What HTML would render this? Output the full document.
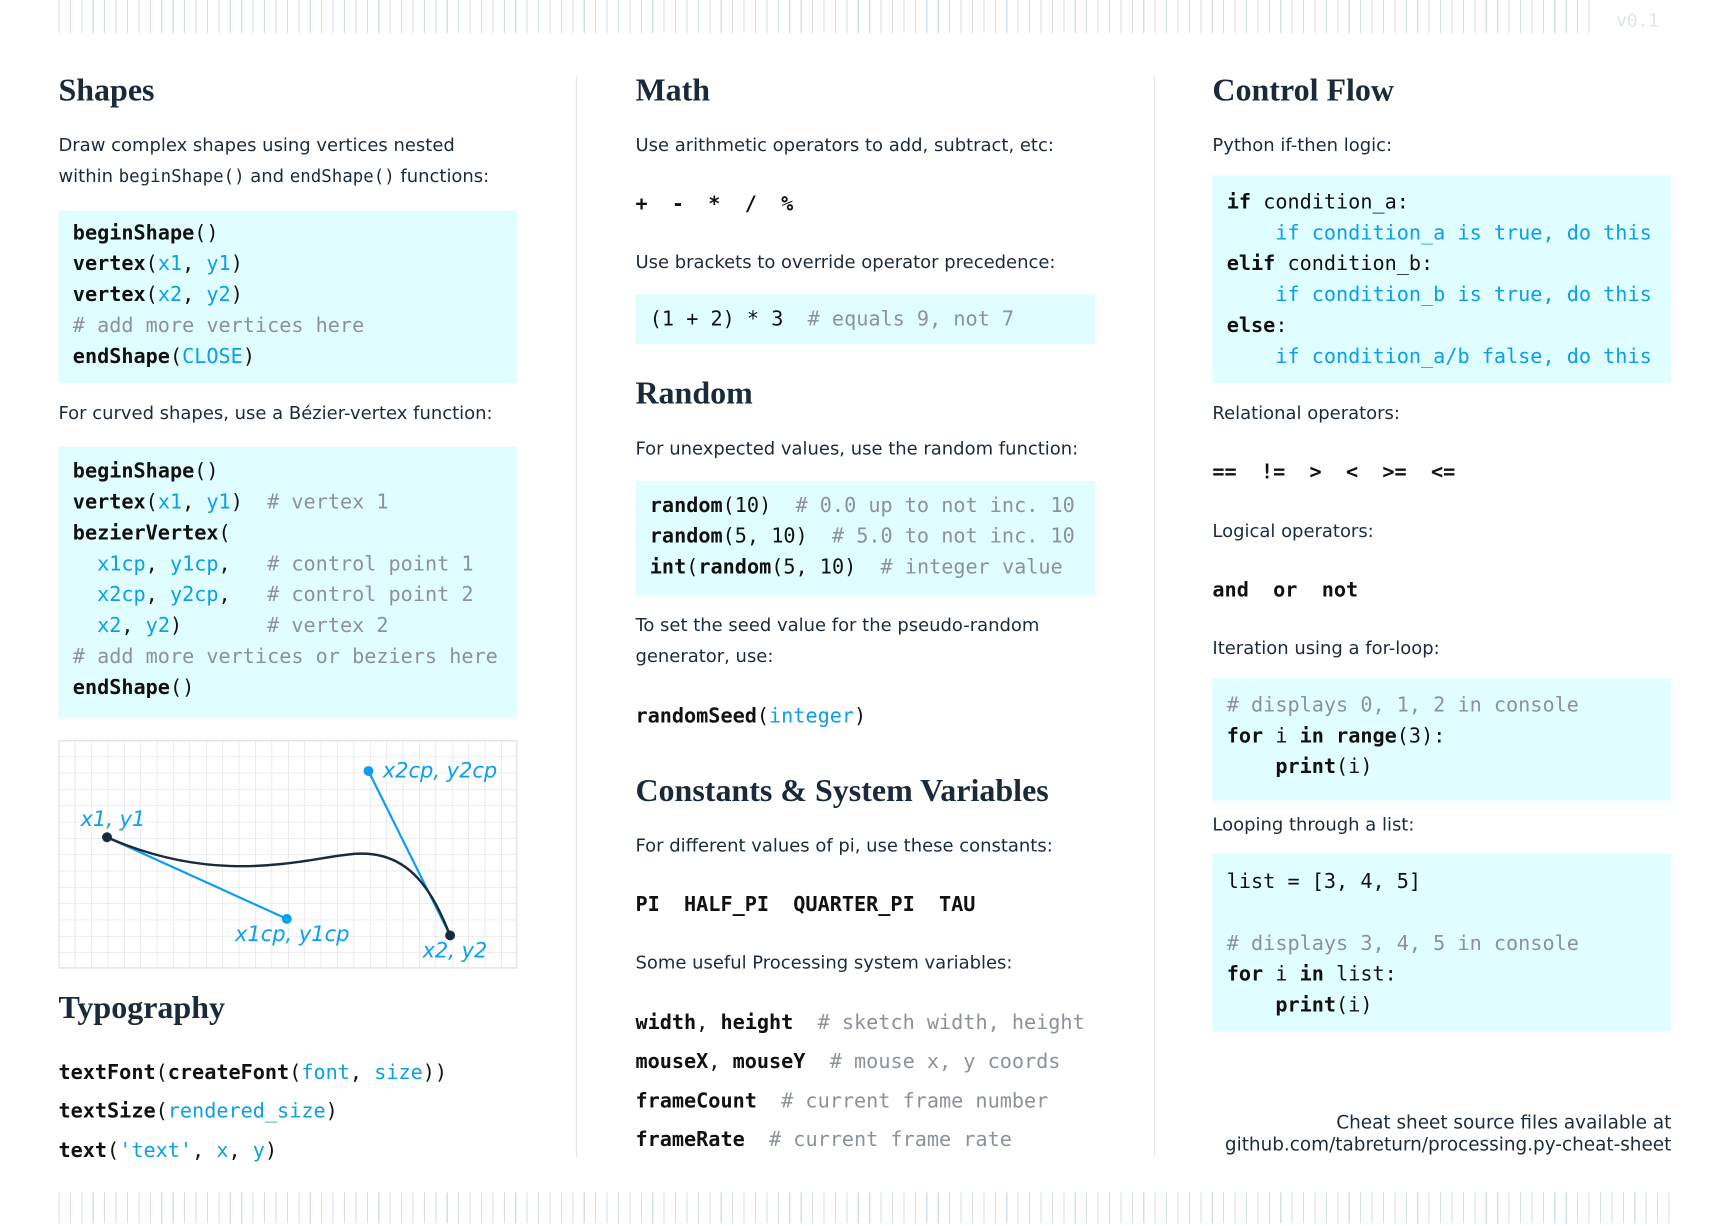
<!DOCTYPE html>
<html><head><meta charset="utf-8"><style>
html,body{margin:0;padding:0;background:#fff;width:1730px;height:1223px;overflow:hidden}
#w{position:absolute;left:0;top:1px;width:1570px;height:1110px;transform:scale(1.1032);transform-origin:0 0;color:#1c2b3a;font-family:"DejaVu Sans","Liberation Sans",sans-serif}
.a{position:absolute;white-space:pre}
h2{position:absolute;margin:0;font-family:"Liberation Serif",serif;font-weight:bold;font-size:29px;line-height:36px;color:#1a2a3a;white-space:nowrap}
.p{position:absolute;font-size:16.3px;line-height:28px;white-space:pre}
.p code{font-family:"DejaVu Sans Mono",monospace;font-size:15.8px}
.box{position:absolute;background:#e0feff}
.c{position:absolute;font-family:"DejaVu Sans Mono",monospace;font-size:18.3px;line-height:28px;white-space:pre;color:#111}
b{font-weight:bold}
.bl{color:#0ba0e4}
.cm{color:#8c9299}
.div{position:absolute;top:68px;height:980px;width:1px;background:#e2e6ea}
.stripes{position:absolute;background:repeating-linear-gradient(90deg,#cfe2ec 0,#cfe2ec 1px,transparent 1px,transparent 10.35px)}
</style></head><body><div id="w">
<div class="stripes" style="left:53px;top:-1px;width:1397px;height:30px"></div>
<div class="a" style="left:1465px;top:8px;font-family:'DejaVu Sans Mono',monospace;font-size:16px;color:#dde6ec">v0.1</div>
<div class="stripes" style="left:53px;top:1080px;width:1463px;height:28px"></div>
<div class="div" style="left:522px"></div>
<div class="div" style="left:1046px"></div>

<!-- col 1 -->
<h2 style="left:53px;top:63px">Shapes</h2>
<div class="p" style="left:53px;top:117px">Draw complex shapes using vertices nested
within <code>beginShape()</code> and <code>endShape()</code> functions:</div>
<div class="box" style="left:53px;top:190px;width:416px;height:156px"></div>
<div class="c" style="left:66px;top:197px"><b>beginShape</b>()
<b>vertex</b>(<span class="bl">x1</span>, <span class="bl">y1</span>)
<b>vertex</b>(<span class="bl">x2</span>, <span class="bl">y2</span>)
<span class="cm"># add more vertices here</span>
<b>endShape</b>(<span class="bl">CLOSE</span>)</div>
<div class="p" style="left:53px;top:360px">For curved shapes, use a Bézier-vertex function:</div>
<div class="box" style="left:53px;top:404px;width:416px;height:246px"></div>
<div class="c" style="left:66px;top:413px"><b>beginShape</b>()
<b>vertex</b>(<span class="bl">x1</span>, <span class="bl">y1</span>)  <span class="cm"># vertex 1</span>
<b>bezierVertex</b>(
  <span class="bl">x1cp</span>, <span class="bl">y1cp</span>,   <span class="cm"># control point 1</span>
  <span class="bl">x2cp</span>, <span class="bl">y2cp</span>,   <span class="cm"># control point 2</span>
  <span class="bl">x2</span>, <span class="bl">y2</span>)       <span class="cm"># vertex 2</span>
<span class="cm"># add more vertices or beziers here</span>
<b>endShape</b>()</div>
<svg class="a" style="left:53px;top:670px" width="417" height="208" viewBox="0 0 417 208">
<defs><pattern id="g" width="14.86" height="14.8" patternUnits="userSpaceOnUse"><path d="M0 0V14.8M0 0H14.86" stroke="#d9dde3" stroke-width="1" fill="none"/></pattern></defs>
<rect x="0.5" y="0.5" width="415" height="206" fill="url(#g)" stroke="#d9dde3"/>
<line x1="44" y1="88" x2="207" y2="162" stroke="#0b9ff0" stroke-width="2"/>
<line x1="281" y1="28" x2="355" y2="177" stroke="#0b9ff0" stroke-width="2"/>
<path d="M44 88 C150 135 230 105 270 103 C320 100 340 140 355 177" stroke="#1c2b3a" stroke-width="2.2" fill="none"/>
<circle cx="44" cy="88" r="4.5" fill="#1c2b3a"/><circle cx="355" cy="177" r="4.5" fill="#1c2b3a"/>
<circle cx="207" cy="162" r="4.5" fill="#0b9ff0"/><circle cx="281" cy="28" r="4.5" fill="#0b9ff0"/>
<g font-family="DejaVu Sans,sans-serif" font-style="italic" font-size="19" fill="#0b9ff0">
<text x="20" y="78">x1, y1</text><text x="294" y="34">x2cp, y2cp</text>
<text x="160" y="182">x1cp, y1cp</text><text x="330" y="197">x2, y2</text></g>
</svg>
<h2 style="left:53px;top:895px">Typography</h2>
<div class="c" style="left:53px;top:954px;line-height:35.3px"><b>textFont</b>(<b>createFont</b>(<span class="bl">font</span>, <span class="bl">size</span>))
<b>textSize</b>(<span class="bl">rendered_size</span>)
<b>text</b>(<span class="bl">'text'</span>, <span class="bl">x</span>, <span class="bl">y</span>)</div>

<!-- col 2 -->
<h2 style="left:576px;top:63px">Math</h2>
<div class="p" style="left:576px;top:117px">Use arithmetic operators to add, subtract, etc:</div>
<div class="c" style="left:576px;top:171px"><b>+  -  *  /  %</b></div>
<div class="p" style="left:576px;top:223px">Use brackets to override operator precedence:</div>
<div class="box" style="left:576px;top:266px;width:417px;height:45px"></div>
<div class="c" style="left:589px;top:275px">(1 + 2) * 3  <span class="cm"># equals 9, not 7</span></div>
<h2 style="left:576px;top:338px">Random</h2>
<div class="p" style="left:576px;top:392px">For unexpected values, use the random function:</div>
<div class="box" style="left:576px;top:435px;width:417px;height:104px"></div>
<div class="c" style="left:589px;top:444px"><b>random</b>(10)  <span class="cm"># 0.0 up to not inc. 10</span>
<b>random</b>(5, 10)  <span class="cm"># 5.0 to not inc. 10</span>
<b>int</b>(<b>random</b>(5, 10)  <span class="cm"># integer value</span></div>
<div class="p" style="left:576px;top:552px">To set the seed value for the pseudo-random
generator, use:</div>
<div class="c" style="left:576px;top:635px"><b>randomSeed</b>(<span class="bl">integer</span>)</div>
<h2 style="left:576px;top:698px">Constants &amp; System Variables</h2>
<div class="p" style="left:576px;top:752px">For different values of pi, use these constants:</div>
<div class="c" style="left:576px;top:806px"><b>PI  HALF_PI  QUARTER_PI  TAU</b></div>
<div class="p" style="left:576px;top:858px">Some useful Processing system variables:</div>
<div class="c" style="left:576px;top:909px;line-height:35.3px"><b>width</b>, <b>height</b>  <span class="cm"># sketch width, height</span>
<b>mouseX</b>, <b>mouseY</b>  <span class="cm"># mouse x, y coords</span>
<b>frameCount</b>  <span class="cm"># current frame number</span>
<b>frameRate</b>  <span class="cm"># current frame rate</span></div>

<!-- col 3 -->
<h2 style="left:1099px;top:63px">Control Flow</h2>
<div class="p" style="left:1099px;top:117px">Python if-then logic:</div>
<div class="box" style="left:1099px;top:158px;width:416px;height:188px"></div>
<div class="c" style="left:1112px;top:169px"><b>if</b> condition_a:
<span class="bl">    if condition_a is true, do this</span>
<b>elif</b> condition_b:
<span class="bl">    if condition_b is true, do this</span>
<b>else</b>:
<span class="bl">    if condition_a/b false, do this</span></div>
<div class="p" style="left:1099px;top:360px">Relational operators:</div>
<div class="c" style="left:1099px;top:414px"><b>==  !=  &gt;  &lt;  &gt;=  &lt;=</b></div>
<div class="p" style="left:1099px;top:467px">Logical operators:</div>
<div class="c" style="left:1099px;top:521px"><b>and  or  not</b></div>
<div class="p" style="left:1099px;top:573px">Iteration using a for-loop:</div>
<div class="box" style="left:1099px;top:614px;width:416px;height:111px"></div>
<div class="c" style="left:1112px;top:625px"><span class="cm"># displays 0, 1, 2 in console</span>
<b>for</b> i <b>in</b> <b>range</b>(3):
    <b>print</b>(i)</div>
<div class="p" style="left:1099px;top:733px">Looping through a list:</div>
<div class="box" style="left:1099px;top:773px;width:416px;height:161px"></div>
<div class="c" style="left:1112px;top:785px">list = [3, 4, 5]

<span class="cm"># displays 3, 4, 5 in console</span>
<b>for</b> i <b>in</b> list:
    <b>print</b>(i)</div>
<div class="a" style="left:1099px;width:416px;top:1006px;text-align:right;font-size:16.7px;line-height:20px">Cheat sheet source files available at
github.com/tabreturn/processing.py-cheat-sheet</div>
</div></body></html>
